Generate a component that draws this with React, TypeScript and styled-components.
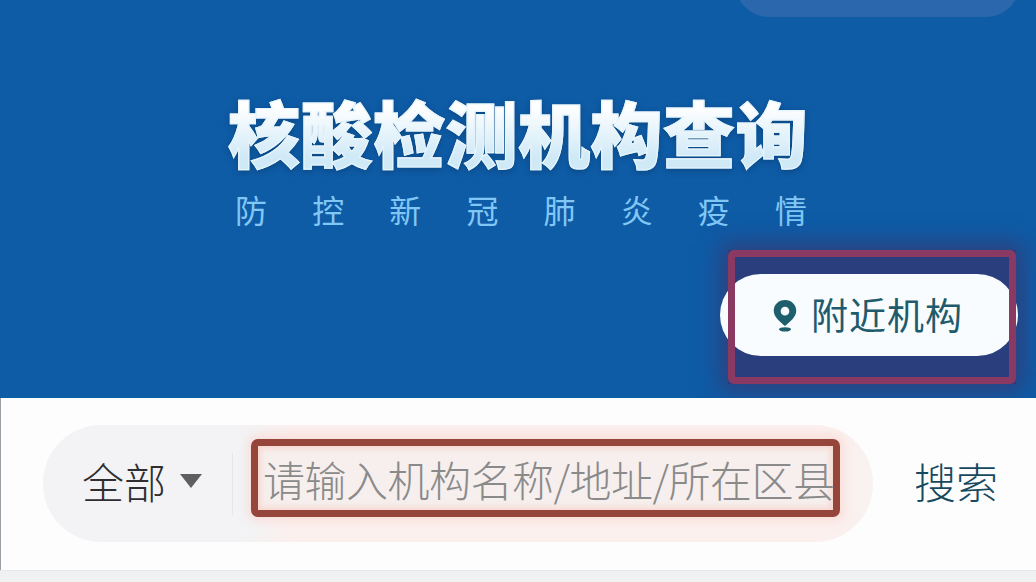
import React from "react";
import styled, { createGlobalStyle } from "styled-components";

const GlobalStyle = createGlobalStyle`
  html, body {
    margin: 0;
    padding: 0;
    background: #f0f1f3;
    overflow: hidden;
  }
  * {
    box-sizing: border-box;
  }
  body {
    font-family: "Noto Sans CJK SC", "Liberation Sans", sans-serif;
  }
`;

function App() {
  return (
    <Page>
      <GlobalStyle />
      <Hero>
        <Corner />
        <Title>核酸检测机构查询</Title>
        <Subtitle>
          {"防控新冠肺炎疫情".split("").map((c) => (
            <span key={c}>{c}</span>
          ))}
        </Subtitle>
        <NearRow>
          <NearButton>
            <PinIcon viewBox="0 0 30 38">
              <path
                fillRule="evenodd"
                d="M15 1C7.5 1 2 6.6 2 13.5 2 20.5 9.5 26.5 15 31c5.5-4.5 13-10.5 13-17.5C28 6.6 22.500 1 15 1zm0 8a5 5 0 1 1 0 10 5 5 0 0 1 0-10z"
              />
              <ellipse cx="15" cy="35" rx="7" ry="2.500" />
            </PinIcon>
            <NearLabel>附近机构</NearLabel>
            <NearMark />
          </NearButton>
        </NearRow>
      </Hero>
      <SearchSection>
        <SearchPill>
          <Scope>
            全部
            <Caret />
          </Scope>
          <Divider />
          <Field>
            <Placeholder>请输入机构名称/地址/所在区县</Placeholder>
          </Field>
        </SearchPill>
        <SearchLink>搜索</SearchLink>
      </SearchSection>
      <Strip />
    </Page>
  );
}

export default App;

const Page = styled.div`
  width: 1036px;
  height: 582px;
  display: flex;
  flex-direction: column;
  overflow: hidden;
`;

const Hero = styled.header`
  position: relative;
  height: 398px;
  padding-top: 86px;
  display: flex;
  flex-direction: column;
  align-items: center;
  overflow: hidden;
  background: #0e5ba6;
`;

const Corner = styled.div`
  position: absolute;
  top: -60px;
  right: 16px;
  width: 285px;
  height: 77px;
  border-radius: 0 0 34px 34px;
  background: #2a67ad;
`;

const Title = styled.h1`
  margin: 0;
  width: 600px;
  font-size: 72px;
  line-height: 90px;
  font-weight: 900;
  letter-spacing: 0.500px;
  text-align: center;
  white-space: nowrap;
  color: transparent;
  background: linear-gradient(180deg, #ffffff 22%, #cfe9f7 80%);
  background-clip: text;
  -webkit-background-clip: text;
  -webkit-text-stroke: 1.2px #e6f4fb;
  filter: drop-shadow(0 2px 3px rgba(6, 50, 90, 0.45));
`;

const Subtitle = styled.div`
  margin-top: 10px;
  margin-left: 6px;
  width: 572px;
  display: flex;
  justify-content: space-between;
  font-size: 32px;
  line-height: 46px;
  color: #80c7f5;
`;

const NearRow = styled.div`
  margin-top: 42px;
  width: 100%;
  padding-right: 18px;
  display: flex;
  justify-content: flex-end;
  isolation: isolate;
`;

const NearButton = styled.div`
  position: relative;
  width: 298px;
  height: 82px;
  padding-left: 52px;
  display: flex;
  align-items: center;
  gap: 13px;
  border-radius: 41px;
  background: #f8fcfe;

  &::before {
    content: "";
    position: absolute;
    z-index: -1;
    top: -24px;
    left: 8px;
    width: 288px;
    height: 134px;
    background: #2a3d7c;
    box-shadow: 0 0 22px 6px rgba(60, 55, 110, 0.8);
  }
`;

const NearLabel = styled.span`
  padding-bottom: 3px;
  color: #1f5b6c;
  font-size: 37px;
  letter-spacing: 1px;
`;

const PinIcon = styled.svg`
  width: 26px;
  height: 35px;
  fill: #1f5f6b;
  flex: none;
`;

const NearMark = styled.div`
  position: absolute;
  top: -24px;
  left: 8px;
  width: 288px;
  height: 134px;
  border: 7px solid #8a3a62;
  border-radius: 6px;
`;

const SearchSection = styled.section`
  flex: 1;
  padding: 27px 38px 28px 42px;
  display: flex;
  align-items: center;
  justify-content: space-between;
  border-left: 1px solid #9aa0a6;
  background: #fdfdfe;
`;

const SearchPill = styled.div`
  width: 830px;
  height: 117px;
  padding-left: 39px;
  display: flex;
  align-items: center;
  border-radius: 58px;
  background: linear-gradient(90deg, #f3f3f5 24%, #fbf0ee 30%, #fbf0ee 96%, #f8f2f1);
`;

const Scope = styled.div`
  display: flex;
  align-items: center;
  gap: 14px;
  width: 150px;
  padding-bottom: 6px;
  font-size: 42px;
  font-weight: 300;
  color: #2f2f31;
`;

const Caret = styled.i`
  width: 0;
  height: 0;
  border-left: 11px solid transparent;
  border-right: 11px solid transparent;
  border-top: 14px solid #5e5e60;
`;

const Divider = styled.div`
  width: 1px;
  height: 62px;
  background: #e6e6e8;
`;

const Field = styled.div`
  margin-left: 18px;
  margin-bottom: 11px;
  width: 589px;
  height: 78px;
  padding-left: 5px;
  display: flex;
  align-items: center;
  overflow: hidden;
  border: 7px solid #96453b;
  border-radius: 7px;
  background: #f6efed;
  box-shadow:
    0 0 8px 4px rgba(250, 205, 198, 0.5),
    inset 0 0 6px 2px rgba(250, 200, 190, 0.7);
`;

const Placeholder = styled.span`
  font-size: 42px;
  font-weight: 300;
  letter-spacing: -0.500px;
  color: #8a8a8b;
  white-space: nowrap;
`;

const SearchLink = styled.div`
  padding-bottom: 6px;
  font-size: 42px;
  font-weight: 300;
  color: #16495e;
`;

const Strip = styled.div`
  height: 12px;
  background: #f0f1f3;
  border-top: 1px solid #e6e7e9;
`;
